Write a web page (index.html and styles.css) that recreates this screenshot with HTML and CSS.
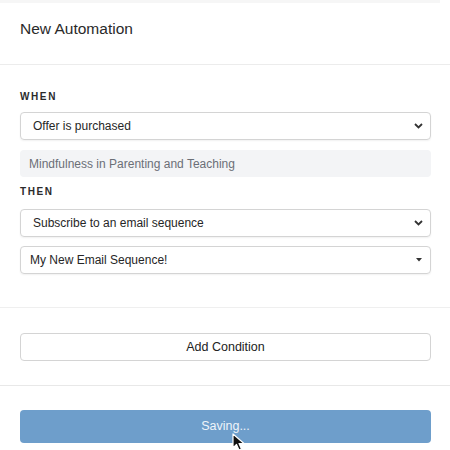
FILE: index.html
```html
<!DOCTYPE html>
<html>
<head>
<meta charset="utf-8">
<link rel="stylesheet" href="styles.css">
</head>
<body>
<div class="panel">
  <div class="top-band"></div>
  <div class="header">New Automation</div>
  <div class="section">
    <div class="label">WHEN</div>
    <div class="select">
      <span>Offer is purchased</span>
      <svg class="chev" width="9" height="6" viewBox="0 0 9 6"><path d="M1 1 L4.5 4.5 L8 1" fill="none" stroke="#333" stroke-width="1.8"/></svg>
    </div>
    <div class="readonly">Mindfulness in Parenting and Teaching</div>
    <div class="label then">THEN</div>
    <div class="select">
      <span>Subscribe to an email sequence</span>
      <svg class="chev" width="9" height="6" viewBox="0 0 9 6"><path d="M1 1 L4.5 4.5 L8 1" fill="none" stroke="#333" stroke-width="1.8"/></svg>
    </div>
    <div class="select select-alt">
      <span>My New Email Sequence!</span>
      <svg class="caret" width="6" height="4" viewBox="0 0 6 4"><path d="M0 0 L6 0 L3 3.5 Z" fill="#333"/></svg>
    </div>
  </div>
  <div class="section-btn">
    <div class="btn-outline">Add Condition</div>
  </div>
  <div class="footer">
    <div class="btn-primary">Saving...</div>
  </div>
  <svg class="cursor" width="16" height="20" viewBox="0 0 16 20"><path d="M1 1 L1 15 L4.5 11.5 L7 17 L9.5 16 L7 10.5 L12 10.5 Z" fill="#111" stroke="#fff" stroke-width="1.2" stroke-linejoin="round"/></svg>
</div>
</body>
</html>
```
FILE: styles.css
```css
* { box-sizing: border-box; }
html, body { margin: 0; padding: 0; background: #fff; }
body { font-family: "Liberation Sans", Arial, sans-serif; color: #333; }
.panel { position: relative; width: 450px; height: 450px; overflow: hidden; }
.top-band { height: 3px; background: #f6f6f6; margin-right: 10px; }
.header {
  padding: 16px 20px 25px;
  line-height: 20px;
  font-size: 15.5px;
  color: #2a2a2a;
  border-bottom: 1px solid #ececec;
}
.section {
  padding: 25px 19px 33px 20px;
  border-bottom: 1px solid #efefef;
}
.label {
  font-size: 10px;
  font-weight: 700;
  letter-spacing: 1.6px;
  line-height: 14px;
  color: #2b2b2b;
  margin-bottom: 8px;
}
.label.then { margin-top: 8px; margin-bottom: 10px; }
.select {
  height: 28px;
  border: 1px solid #d4d4d4;
  border-radius: 4px;
  box-shadow: 0 1px 2px rgba(0,0,0,0.06);
  display: flex;
  align-items: center;
  justify-content: space-between;
  padding: 0 7px 0 12px;
  font-size: 12px;
  color: #262626;
  margin-bottom: 10px;
}
.select-alt { padding-left: 9px; margin-top: -1px; margin-bottom: 0; }
.select-alt .caret { margin-right: 1px; }
.readonly {
  height: 27px;
  background: #f3f4f6;
  border-radius: 4px;
  display: flex;
  align-items: center;
  padding-left: 9px;
  font-size: 12px;
  color: #6b6f76;
}
.section-btn {
  padding: 25px 19px 24px 20px;
  border-bottom: 1px solid #e8e8e8;
}
.btn-outline {
  height: 28px;
  border: 1px solid #d4d4d4;
  border-radius: 4px;
  display: flex;
  align-items: center;
  justify-content: center;
  font-size: 12.5px;
  color: #222;
}
.footer { padding: 24px 19px 0 20px; }
.btn-primary {
  height: 33px;
  background: #6e9ecb;
  border-radius: 4px;
  display: flex;
  align-items: center;
  justify-content: center;
  font-size: 12.5px;
  color: #eef4fa;
  padding-bottom: 2px;
}
.cursor { position: absolute; left: 232px; top: 433px; }
```
